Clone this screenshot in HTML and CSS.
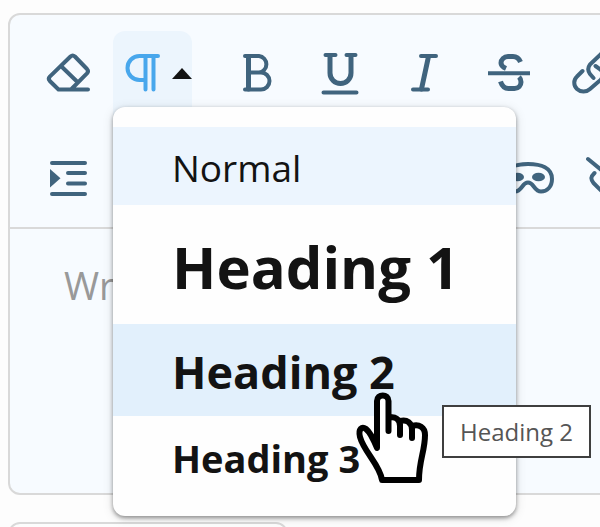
FILE: index.html
```
<!DOCTYPE html>
<html lang="en">
<head>
    <meta charset="UTF-8">
    <meta name="viewport" content="width=device-width, initial-scale=1.0">
    <title>Rich Text Editor</title>
    <link rel="stylesheet" href="styles.css">
</head>
<body>

    <div class="editor">
        <div class="toolbar">
            <div class="toolbar-row">
                <button class="tool" type="button" aria-label="Clear formatting">
                    <svg class="icon" viewBox="0 0 48 48"><path d="M44 40.500H14.500L5.800 32q-2-2.200 0-4.400L26.500 7.500q2.200-2 4.400 0L43 20q2 2.200 0 4.400L27.500 40M17.500 17.500L34 33.500"/></svg>
                </button>
                <div class="dropdown">
                    <button class="tool tool-open" type="button" aria-label="Paragraph format" aria-expanded="true">
                        <svg class="icon" viewBox="0 0 48 48"><path d="M39 7H20.500a12 12 0 0 0 0 24H26M26.500 7v33.500M34.500 7v33.500"/></svg>
                        <span class="caret"></span>
                    </button>
                    <div class="menu">
                        <button class="menu-item normal" type="button">Normal</button>
                        <button class="menu-item h1" type="button">Heading 1</button>
                        <div class="menu-hover">
                            <button class="menu-item h2" type="button">Heading 2</button>
                            <div class="tooltip" role="tooltip">Heading 2</div>
                            <svg class="pointer" viewBox="0 0 76 96"><path d="M28 90C26 75 10 62 6 47C4 39 8 36 12 39C16 42 19 48 23 58V11C23 3.500 34.500 3.500 34.500 11V41V28C41 26 46 29 46 36V45V31C53 29 58 33 58 40V48V36C65 34 71 37 71 45C71 61 65 70 65 90Z"/></svg>
                        </div>
                        <button class="menu-item h3" type="button">Heading 3</button>
                    </div>
                </div>
                <button class="tool" type="button" aria-label="Bold">
                    <svg class="icon" viewBox="0 0 48 48"><path d="M12 7H26a8.300 8.300 0 0 1 0 16.500H15M26 23.500h2a8.500 8.500 0 0 1 0 17H12"/><path class="thick" d="M15.500 7.500v32.500"/></svg>
                </button>
                <button class="tool" type="button" aria-label="Underline">
                    <svg class="icon" viewBox="0 0 48 48"><path d="M8.500 6H18.500M29.500 6h9M6.500 43.500h33"/><path class="thick" d="M13 6.500v17.500a10.500 10.500 0 0 0 21 0V6.500"/></svg>
                </button>
                <button class="tool" type="button" aria-label="Italic">
                    <svg class="icon" viewBox="0 0 48 48"><path d="M20 7h15M12 40.500H27"/><path class="thick" d="M27.500 7.500L20.500 40"/></svg>
                </button>
                <button class="tool" type="button" aria-label="Strikethrough">
                    <svg class="icon" viewBox="0 0 48 48"><path class="butt" d="M3 24.300h42"/><path class="thick butt" d="M35.500 13C34 9.500 31.500 7.500 28 7.500h-5C19 7.500 16 10.500 16 14c0 2.500 1.500 4 5 5.500M15.500 32.500C17 37 19.500 39.500 23.500 39.500h6c4 0 6.500-3 6.500-6.500 0-2-.5-3.500-2-5"/></svg>
                </button>
                <button class="tool" type="button" aria-label="Insert link">
                    <svg class="icon" viewBox="0 0 48 48"><path d="M13.500 22L8 27.500a8.500 8.500 0 0 0 0 12.500 9.500 9.500 0 0 0 13 0L31.500 31a8 8 0 0 0 0-10.500l-5-3.500M24.500 29l-3.500-4a8 8 0 0 1 0-9.500L31 6a9 9 0 0 1 13 13L39 25"/></svg>
                </button>
            </div>
            <div class="toolbar-row">
                <button class="tool" type="button" aria-label="Indent">
                    <svg class="icon" viewBox="0 0 48 48"><path d="M8 9h33M8 40h33M24 19h17M24 29.500h17"/><path class="solid" d="M6 15v18.500l10.500-9.200z"/></svg>
                </button>
                <div class="tool-group">
                    <button class="tool" type="button" aria-label="Mask">
                        <svg class="icon" viewBox="0 0 48 48"><path d="M24 10C37 10 48 14 48 25c0 8-5 12.500-11 12.500-7 0-7-9-13-9S18 37.500 11 37.500C5 37.500 0 33 0 25 0 14 11 10 24 10z"/><ellipse class="solid" cx="34.500" cy="23" rx="6.500" ry="4.300"/><ellipse class="solid" cx="13.500" cy="23" rx="6.500" ry="4.300"/></svg>
                    </button>
                    <button class="tool" type="button" aria-label="Remove link">
                        <svg class="icon" viewBox="0 0 48 48"><path d="M0 5l44 36M6.500 19c-4 4-4 6-1 10l9 9M18 13l6-6 18 18-5 6"/></svg>
                    </button>
                </div>
            </div>
        </div>
        <textarea class="content" placeholder="Write something..." aria-label="Content"></textarea>
    </div>

    <div class="panel"></div>

</body>
</html>
```
FILE: styles.css
```
body {
    font-family: "Open Sans", "Noto Sans", sans-serif;
    background-color: #fdfdfd;
    color: #131313;
    margin: 0;
    padding: 13px 0 0 8px;
    overflow: hidden;
}
button {
    font-family: inherit;
    color: inherit;
    border: none;
    background: none;
    padding: 0;
    cursor: pointer;
}
/* The editor runs past the right edge of narrow windows */
.editor {
    box-sizing: border-box;
    width: calc(100% + 80px);
    border: 2px solid #d9d9d9;
    border-radius: 12px;
    background-color: #f7fbff;
}
.toolbar {
    padding: 16px 19px 7px;
    border-bottom: 2px solid #d9d9d9;
}
.toolbar-row {
    display: flex;
    gap: 6px;
}
.toolbar-row + .toolbar-row {
    margin-top: 21px;
}
.tool {
    display: flex;
    flex: none;
    align-items: center;
    justify-content: center;
    width: 78px;
    height: 84px;
    color: #40647e;
}
.tool-open {
    justify-content: flex-end;
    gap: 5px;
    width: 79px;
    border-radius: 12px 12px 0 0;
    background-color: #ecf5fd;
    color: #48a7ec;
}
.tool-group {
    display: flex;
    gap: 6px;
    margin-left: 376px;
}
.icon {
    flex: none;
    width: 48px;
    height: 48px;
    overflow: visible;
    fill: none;
    stroke: currentColor;
    stroke-width: 4;
    stroke-linecap: round;
    stroke-linejoin: round;
}
.icon .thick {
    stroke-width: 5;
}
.icon .butt {
    stroke-linecap: butt;
}
.icon .solid {
    fill: currentColor;
    stroke: none;
}
.caret {
    border-left: 10px solid transparent;
    border-right: 10px solid transparent;
    border-bottom: 11px solid #131313;
}
.dropdown {
    position: relative;
    margin-right: 20px;
}
.menu {
    position: absolute;
    top: 76px;
    left: 0;
    z-index: 1;
    box-sizing: border-box;
    width: 403px;
    padding: 20px 0 16px;
    border-radius: 12px;
    background-color: #fefefe;
    box-shadow: 0 2px 4px rgba(0, 0, 0, 0.4), 0 2px 12px rgba(0, 0, 0, 0.12);
}
.menu-item {
    display: block;
    width: 100%;
    padding: 4px 0 0 59px;
    text-align: left;
    font-weight: bold;
    white-space: nowrap;
}
.normal {
    font-size: 37px;
    font-weight: normal;
    line-height: 74px;
    background-color: #ecf5fe;
}
.h1 {
    font-size: 58px;
    line-height: 115px;
}
.h2 {
    font-size: 45px;
    line-height: 88px;
    background-color: #e2f0fc;
}
.h3 {
    padding-top: 0;
    font-size: 38px;
    line-height: 84px;
}
.menu-hover {
    position: relative;
}
.tooltip {
    position: absolute;
    top: 81px;
    left: 329px;
    z-index: 1;
    padding: 0 16px;
    border: 2px solid #3f3f3f;
    background-color: #fff;
    color: #555;
    font-size: 24px;
    line-height: 49px;
    white-space: nowrap;
}
.pointer {
    position: absolute;
    top: 66px;
    left: 241px;
    z-index: 1;
    width: 76px;
    height: 96px;
    fill: #fff;
    stroke: #000;
    stroke-width: 6;
    stroke-linejoin: round;
}
.content {
    display: block;
    box-sizing: border-box;
    width: 100%;
    height: 264px;
    padding: 28px 54px;
    border: none;
    outline: none;
    resize: none;
    background: none;
    font-family: inherit;
    font-size: 38px;
    line-height: 56px;
}
.content::placeholder {
    color: #999;
}
.panel {
    box-sizing: border-box;
    width: 280px;
    height: 80px;
    margin-top: 27px;
    border: 2px solid #d9d9d9;
    border-radius: 12px;
}
```
